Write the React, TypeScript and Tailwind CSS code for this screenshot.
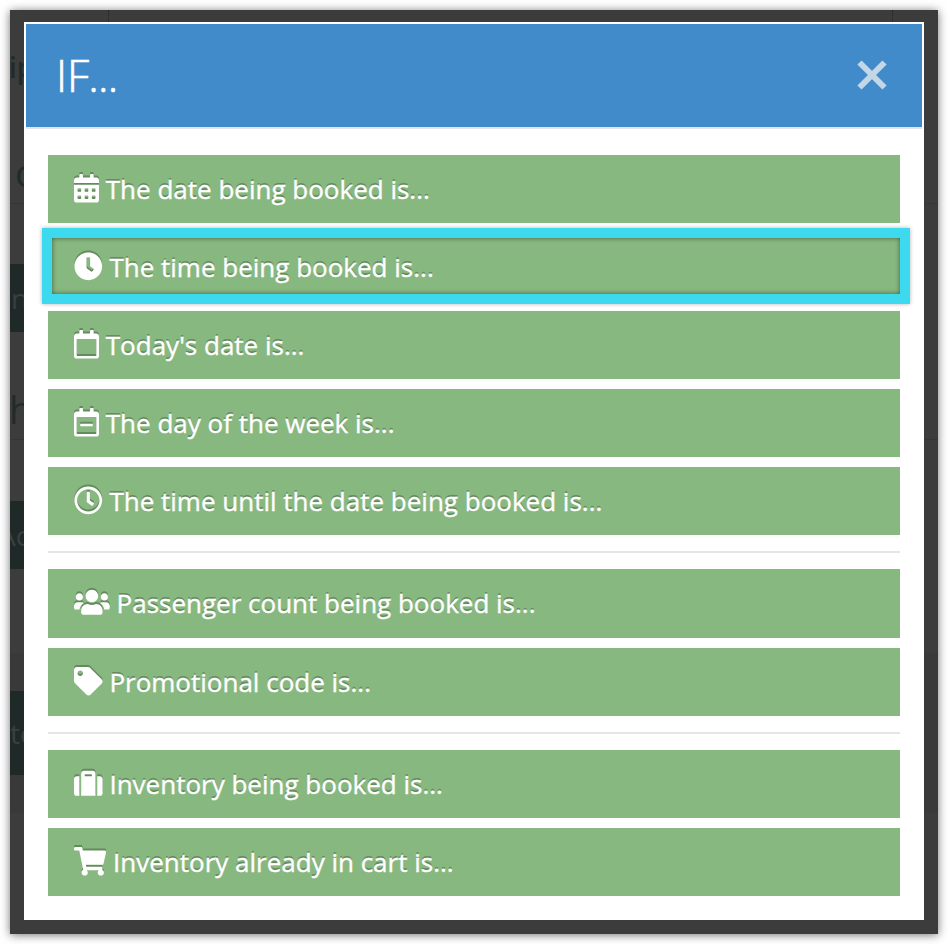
import type { ReactNode } from "react";
import {
  FaCalendarAlt,
  FaClock,
  FaRegCalendar,
  FaRegCalendarMinus,
  FaRegClock,
  FaUsers,
  FaTag,
  FaSuitcase,
  FaShoppingCart,
} from "react-icons/fa";

const ICON = "-mt-px h-[28.6px] shrink-0 drop-shadow-[0_-2px_0_rgba(0,0,0,0.25)]";

function Option({ icon, children, active = false, tall = false }: { icon: ReactNode; children: ReactNode; active?: boolean; tall?: boolean }) {
  return (
    <button
      type="button"
      className={`relative flex w-full shrink-0 items-center gap-[6.8px] bg-[#87b87f] pl-[26px] text-left text-[26px] leading-[38px] text-white [-webkit-text-stroke:0.4px_white] [text-shadow:0_-2px_0_rgba(0,0,0,0.25)] ${tall ? "h-[69px] pb-px" : "h-[68px]"}`}
    >
      {icon}
      <span className="whitespace-nowrap">{children}</span>
      {active && (
        <span className="absolute -top-[5px] -right-[10px] -bottom-[3px] -left-[6px] border-10 border-[#3cd9ef] shadow-[0_0_4px_rgba(0,0,0,0.3),inset_0_0_5px_rgba(0,0,0,0.5)]" />
      )}
    </button>
  );
}

function Backdrop() {
  return (
    <div className="absolute inset-0 overflow-hidden text-[#222b2b]">
      <span className="absolute top-[38px] -left-px text-[28px] leading-[38px] font-semibold">ip</span>
      <span className="absolute top-[136px] left-[5px] text-[38px] leading-[52px]">c</span>
      <div className="absolute top-[193px] h-px w-full bg-[#363636]" />
      <div className="absolute top-[254px] h-[68px] w-[14px] bg-[#1f2928]" />
      <span className="absolute top-[269px] left-[1px] text-[28px] leading-[38px] text-[#3b3f3f]">n</span>
      <span className="absolute top-[373px] -left-px text-[38px] leading-[52px]">h</span>
      <div className="absolute top-[429px] h-px w-full bg-[#363636]" />
      <div className="absolute top-[491px] h-[68px] w-[14px] bg-[#1f2928]" />
      <span className="absolute top-[506px] -left-[12px] text-[28px] leading-[38px] text-[#3b3f3f]">Ac</span>
      <div className="absolute top-[643px] h-[160px] w-full bg-[#393939]" />
      <div className="absolute top-[681px] h-[84px] w-[14px] bg-[#1f2928]" />
      <span className="absolute top-[704px] left-0 text-[28px] leading-[38px] text-[#3b3f3f]">te</span>
      <div className="absolute top-0 left-[98px] h-3 border-l border-dotted border-[#222]" />
      <div className="absolute top-0 left-[882px] h-3 border-l border-dotted border-[#222]" />
    </div>
  );
}

export default function App() {
  return (
    <div className="h-[944px] w-[948px] overflow-hidden bg-white p-[10px] font-['Open_Sans','Noto_Sans',sans-serif]">
      <div className="relative h-[924px] w-[928px] bg-[#3c3c3c] px-[14px] pt-3 shadow-[0_1px_9px_rgba(0,0,0,0.55)]">
        <Backdrop />
        <div className="relative flex h-[898px] w-[900px] flex-col bg-white px-0.5 pt-0.5">
          <header className="flex h-[105px] shrink-0 items-center justify-between border-b-2 border-[#e5e5e5] bg-[#428bca] pr-[35px] pb-px pl-[30px]">
            <h1 className="text-[44px] leading-[60px] font-light text-white [-webkit-text-stroke:0.6px_white]">
              IF<span className="-ml-px tracking-[-0.7px]">...</span>
            </h1>
            <button type="button" aria-label="Close">
              <svg width="30" height="30" viewBox="0 0 30 30" fill="none" stroke="#c4d7e7" strokeWidth="6">
                <path d="M2.5 2.5 27.5 27.5M27.5 2.5 2.5 27.5" />
              </svg>
            </button>
          </header>
          <main className="flex flex-col gap-[10px] px-[22px] pt-[26px]">
            <Option icon={<FaCalendarAlt className={`${ICON} w-[25px]`} />}>The date being booked is...</Option>
            <Option active icon={<FaClock className={`${ICON} w-[28.6px]`} />}>The time being booked is...</Option>
            <Option icon={<FaRegCalendar className={`${ICON} w-[25px]`} />}>Today's date is...</Option>
            <Option icon={<FaRegCalendarMinus className={`${ICON} w-[25px]`} />}>The day of the week is...</Option>
            <Option icon={<FaRegClock className={`${ICON} w-[28.6px]`} />}>The time until the date being booked is...</Option>
            <hr className="my-1.5 h-0.5 border-0 bg-[#e5e5e5]" />
            <Option tall icon={<FaUsers className={`${ICON} w-[35.75px]`} />}>Passenger count being booked is...</Option>
            <Option icon={<FaTag className={`${ICON} w-[28.6px]`} />}>Promotional code is...</Option>
            <hr className="my-1.5 h-0.5 border-0 bg-[#e5e5e5]" />
            <Option icon={<FaSuitcase className={`${ICON} w-[28.6px]`} />}>Inventory being booked is...</Option>
            <Option icon={<FaShoppingCart className={`${ICON} w-[32.2px]`} />}>Inventory already in cart is...</Option>
          </main>
        </div>
      </div>
    </div>
  );
}
